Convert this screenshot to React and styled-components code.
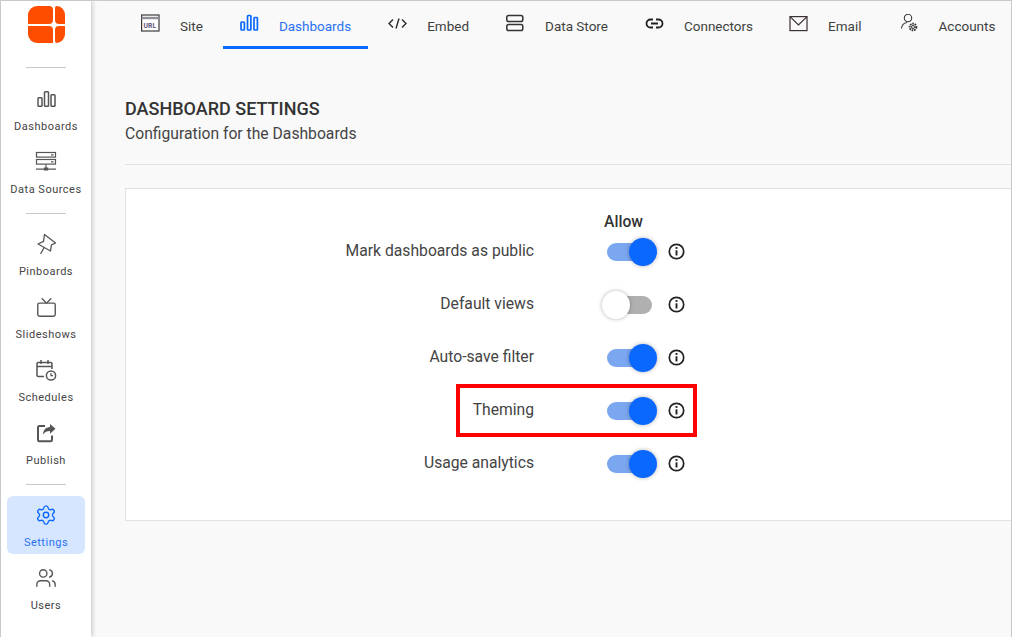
import React from "react";
import styled, { createGlobalStyle } from "styled-components";
import { Settings, Users, Tv } from "lucide-react";

const Global = createGlobalStyle`
  html, body { margin: 0; padding: 0; height: 100%; overflow: hidden; background: #f9f9f9; }
  #root { height: 637px; }
  * { box-sizing: border-box; }
`;
const Frame = styled.div`
  width: 1012px; height: 637px; display: flex; overflow: hidden;
  font-family: Roboto, sans-serif; color: #333;
  border: 1px solid #c9c9c9; border-bottom: 0; background: #f9f9f9;
`;
const Sidebar = styled.nav`
  width: 90px; flex: none; background: #fff; display: flex; flex-direction: column; align-items: center;
  padding-top: 5px; box-shadow: 1px 0 5px rgba(0,0,0,.22); z-index: 1;
`;
const Logo = styled.svg`width: 37px; height: 37px; display: block;`;
const SideRule = styled.hr`
  width: 40px; height: 1px; border: 0; background: #c8c8c8; flex: none;
  margin: ${p => p.$top}px 0 ${p => p.$bottom}px;
`;
const SideItem = styled.div`
  width: 78px; height: 58px; flex: none; border-radius: 6px; display: flex; flex-direction: column; align-items: center;
  margin-bottom: 5px; padding-top: 8px;
  background: ${p => p.$active ? "#d6e6ff" : "transparent"};
  color: ${p => p.$active ? "#0a68ff" : "#555"};
`;
const SideIcon = styled.div`height: 22px; display: flex; align-items: center; justify-content: center;`;
const SideLabel = styled.span`
  font-size: 11px; letter-spacing: .5px; line-height: 13px; margin-top: 10px; white-space: nowrap;
  color: ${p => p.$active ? "#2a72f5" : "#444"};
`;
const Main = styled.main`flex: 1; min-width: 0; display: flex; flex-direction: column;`;
const Tabs = styled.div`display: flex; height: 48px; flex: none; padding-left: 33px; margin-top: -1px;`;
const Tab = styled.div`
  display: flex; align-items: flex-start; gap: 18px; padding: 14px 17px 0; height: 49px; white-space: nowrap; flex: none;
  margin-right: ${p => p.$after}px;
  border-bottom: 3px solid ${p => p.$active ? "#0a68ff" : "transparent"};
  color: ${p => p.$active ? "#0a68ff" : "#3a3a3a"};
`;
const TabIcon = styled.svg`width: 21px; height: 21px; flex: none; display: block;`;
const TabText = styled.span`font-size: 13.500px; line-height: 16px; margin-top: 4px; color: ${p => p.$active ? "#2a72f5" : "#3f3f3f"};`;
const Content = styled.div`padding: 51px 0 0 34px; flex: 1; min-width: 0;`;
const Title = styled.h1`margin: 0; font-size: 18px; font-weight: 500; line-height: 19px; color: #333;`;
const Subtitle = styled.p`margin: 7px 0 0; font-size: 15.700px; line-height: 17px; color: #444;`;
const Rule = styled.hr`border: 0; height: 1px; background: #e2e2e2; margin: 22px 0 23px;`;
const Card = styled.section`
  height: 333px; width: 910px; background: #fff; border: 1px solid #e2e2e2; padding-top: 24px;
`;
const AllowHead = styled.div`
  font-size: 15.700px; font-weight: 500; line-height: 17px; color: #333; margin-left: 478px; height: 17px;
`;
const RowList = styled.div`margin-top: -5px; display: flex; flex-direction: column;`;
const Row = styled.div`position: relative; display: flex; align-items: center; height: 53px;`;
const RowLabel = styled.span`
  width: 408px; text-align: right; font-size: 15.700px; color: #444; white-space: nowrap; padding-bottom: 2px;
`;
const Track = styled.div`
  position: relative; width: 45px; height: 18px; border-radius: 9px; margin-left: 73px; flex: none;
  background: ${p => p.$on ? "#7ba7f0" : "#b0b0b0"};
`;
const Thumb = styled.div`
  position: absolute; top: -5px; width: 28px; height: 28px; border-radius: 50%;
  ${p => p.$on ? "right: -5px; background: #0a68ff;" : "left: -5px; background: #fff;"}
  box-shadow: 0 0 4px rgba(0,0,0,.3);
`;
const InfoIcon = styled.svg`width: 17px; height: 17px; margin-left: 16px; flex: none; display: block;`;
const Highlight = styled.div`
  position: absolute; left: 330px; top: 0; width: 241px; height: 53px; border: 4px solid #f00; pointer-events: none;
`;

const ChartGlyph = () => (
  <svg width="21" height="21" viewBox="0 0 21 21" fill="none" stroke="currentColor" strokeWidth="1.500">
    <rect x="2" y="8.700" width="4" height="8.500" rx=".8" />
    <rect x="8.500" y="2.700" width="4" height="14.500" rx=".8" />
    <rect x="15" y="5.700" width="4" height="11.500" rx=".8" />
  </svg>
);
const ServerGlyph = () => (
  <svg width="22" height="22" viewBox="0 0 22 22" fill="none" stroke="currentColor" strokeWidth="1.200">
    <rect x="1.500" y="1.500" width="19" height="4.600" />
    <rect x="1.500" y="8.500" width="19" height="4.600" />
    <path d="M16 3.800h2.500M16 10.800h2.500M11 13.500v3.500M1 18.200h20" />
    <rect x="8.800" y="16.500" width="4.400" height="3" fill="currentColor" stroke="none" />
  </svg>
);
const PinGlyph = () => (
  <svg width="22" height="22" viewBox="0 0 22 22" fill="none" stroke="currentColor" strokeWidth="1.300" strokeLinejoin="round" strokeLinecap="round">
    <path d="M9.500 1.500 20.500 10l-4 1.800-1 6.200L3 11l5.500-2.700z" />
    <path d="M9 14.800 5.800 20.500" />
  </svg>
);
const CalendarGlyph = () => (
  <svg width="22" height="22" viewBox="0 0 22 22" fill="none" stroke="currentColor" strokeWidth="1.500">
    <path d="M9 17.500H3.200a1.200 1.200 0 0 1-1.200-1.200V4.700a1.200 1.200 0 0 1 1.200-1.200h12.600a1.200 1.200 0 0 1 1.200 1.200V10" />
    <path d="M6 1v4M13 1v4M2 7.500h15" />
    <circle cx="16" cy="16.500" r="4.600" />
    <path d="M16 14v2.700h2" strokeWidth="1.200" />
  </svg>
);
const PublishGlyph = () => (
  <svg width="22" height="22" viewBox="0 0 22 22" fill="none" stroke="currentColor" strokeWidth="2">
    <path d="M17 13.500V18a1.200 1.200 0 0 1-1.200 1.200H4.200A1.200 1.200 0 0 1 3 18V5.200A1.200 1.200 0 0 1 4.200 4H10" />
    <path d="M20.500 6.800 15 2v3c-4.400.3-6.700 3-7 7.500 1.700-2.500 3.900-3.500 7-3.500v2.800z" fill="currentColor" stroke="none" />
  </svg>
);
const Info = () => (
  <InfoIcon viewBox="0 0 17 17" fill="none" stroke="#222">
    <circle cx="8.500" cy="8.500" r="7.200" strokeWidth="1.700" />
    <path d="M8.500 7.300v5.200" strokeWidth="1.900" />
    <path d="M8.500 4v1.900" strokeWidth="1.900" />
  </InfoIcon>
);

const side1 = [
  ["Dashboards", <ChartGlyph />],
  ["Data Sources", <ServerGlyph />],
];
const side2 = [
  ["Pinboards", <PinGlyph />],
  ["Slideshows", <Tv size={21} strokeWidth={1.600} />],
  ["Schedules", <CalendarGlyph />],
  ["Publish", <PublishGlyph />],
];

const tabs = [
  ["Site", 3, (
    <g>
      <rect x=".6" y="1" width="17.400" height="16" stroke="#3a3a3a" strokeWidth="1.200" fill="#fff" />
      <path d="M.6 4h17.400" stroke="#8f8f9a" strokeWidth="2.400" />
      <text x="2.600" y="14" fontSize="6.800" fontWeight="700" fontFamily="Roboto, sans-serif" fill="#5d5478">URL</text>
    </g>
  )],
  ["Dashboards", 3, (
    <g fill="none" stroke="currentColor" strokeWidth="1.700">
      <rect x="1" y="8" width="3.400" height="8" rx=".7" />
      <rect x="7.500" y="1.500" width="3.400" height="14.500" rx=".7" />
      <rect x="14" y="3.500" width="3.400" height="12.500" rx=".7" />
    </g>
  ), true],
  ["Embed", 3, (
    <g fill="none" stroke="#2b2b2b" strokeWidth="1.400">
      <path d="M5 5.500 1 9.500l4 4M14 5.500l4 4-4 4M11 4.500l-3 10" />
    </g>
  )],
  ["Data Store", 3, (
    <g fill="none" stroke="#333" strokeWidth="1.500">
      <rect x=".8" y="1.500" width="16" height="6" rx="1.800" />
      <rect x=".8" y="10.500" width="16" height="6" rx="1.800" />
    </g>
  )],
  ["Connectors", 2, (
    <g fill="none" stroke="#222" strokeWidth="1.800">
      <path d="M8 5.500H5.500a4 4 0 0 0 0 8H8M11 5.500h2.500a4 4 0 0 1 0 8H11M6 9.500h7" />
    </g>
  )],
  ["Email", 4, (
    <g fill="none" stroke="#3a2f33" strokeWidth="1.200">
      <rect x="1" y="2.600" width="17" height="14" />
      <path d="m1 2.600 8.500 8.400L18 2.600" />
    </g>
  )],
  ["Accounts", 0, (
    <g fill="none" stroke="#3a3a3a" strokeWidth="1.100">
      <circle cx="8" cy="4" r="3.700" />
      <path d="M1.500 14.500c.3-3 2.300-5.500 5.500-6" />
      <circle cx="13" cy="13" r="3.300" strokeWidth="2" strokeDasharray="1.600 .8" />
      <circle cx="13" cy="13" r="1.500" strokeWidth="1" />
    </g>
  )],
];

const rows = [
  ["Mark dashboards as public", true],
  ["Default views", false],
  ["Auto-save filter", true],
  ["Theming", true, true],
  ["Usage analytics", true],
];

export default function App() {
  const item = ([label, icon], active) => (
    <SideItem key={label} $active={active}>
      <SideIcon>{icon}</SideIcon>
      <SideLabel $active={active}>{label}</SideLabel>
    </SideItem>
  );
  return (
    <>
      <Global />
      <Frame>
        <Sidebar>
          <Logo viewBox="0 0 37 37" fill="#ff4d00">
            <path d="M9 0H21a4 4 0 0 1 4 4V14a4 4 0 0 1-4 4H0V9a9 9 0 0 1 9-9z" />
            <path d="M27 2a2 2 0 0 1 2-2a8 9 0 0 1 8 9V18H31a4 4 0 0 1-4-4z" />
            <path d="M0 20H21a4 4 0 0 1 4 4V37H9a9 9 0 0 1-9-9z" />
            <path d="M31 20H37V28a9 9 0 0 1-8 9a2 2 0 0 1-2-2V24a4 4 0 0 1 4-4z" />
          </Logo>
          <SideRule $top={24} $bottom={12} />
          {side1.map(i => item(i))}
          <SideRule $top={7} $bottom={11} />
          {side2.map(i => item(i))}
          <SideRule $top={7} $bottom={11} />
          {item(["Settings", <Settings size={22} strokeWidth={1.500} />], true)}
          {item(["Users", <Users size={22} strokeWidth={1.500} />])}
        </Sidebar>
        <Main>
          <Tabs>
            {tabs.map(([label, after, glyph, active]) => (
              <Tab key={label} $active={active} $after={after}>
                <TabIcon viewBox="0 0 21 21">{glyph}</TabIcon>
                <TabText $active={active}>{label}</TabText>
              </Tab>
            ))}
          </Tabs>
          <Content>
            <Title>DASHBOARD SETTINGS</Title>
            <Subtitle>Configuration for the Dashboards</Subtitle>
            <Rule />
            <Card>
              <AllowHead>Allow</AllowHead>
              <RowList>
                {rows.map(([label, on, marked]) => (
                  <Row key={label}>
                    <RowLabel>{label}</RowLabel>
                    <Track $on={on}><Thumb $on={on} /></Track>
                    <Info />
                    {marked && <Highlight />}
                  </Row>
                ))}
              </RowList>
            </Card>
          </Content>
        </Main>
      </Frame>
    </>
  );
}
